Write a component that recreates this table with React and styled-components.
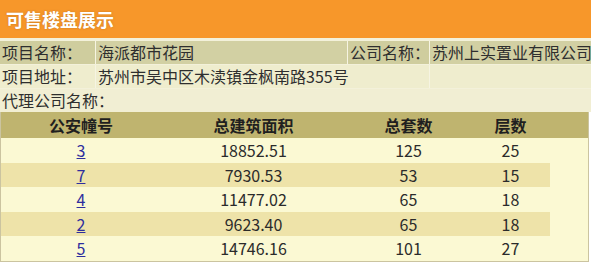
import React from "react";
import styled, { createGlobalStyle } from "styled-components";

const GlobalStyle = createGlobalStyle`
  body {
    margin: 0;
    background: #ffffff;
    font-family: "Noto Sans CJK SC", "Noto Sans", sans-serif;
  }
`;

const Wrapper = styled.div`
  width: 591px;
  display: flex;
  flex-direction: column;
`;

const TitleBar = styled.div`
  height: 38px;
  line-height: 38px;
  padding-left: 6px;
  background: #f7972a;
  color: #ffffff;
  font-size: 18px;
  font-weight: 700;
  text-shadow: 0 0 2px rgba(150, 90, 20, 0.5);
`;

const Info = styled.div`
  display: grid;
  grid-template-columns: 96px 252px 82px 1fr;
  padding-top: 3px;
  background: #f3f1da;
  row-gap: 1px;
`;

const Cell = styled.div`
  height: 23px;
  line-height: 23px;
  padding-left: 2px;
  font-size: 16px;
  color: #2e2e2e;
  white-space: nowrap;
  overflow: hidden;
  background: ${p => p.$bg};
  border-right: ${p => (p.$last ? "none" : "1px solid #f6f4e2")};
  grid-column: ${p => p.$span || "auto"};
`;

const DataBox = styled.div`
  width: 587px;
  border: 1px solid #cbc4a0;
  border-top: none;
  background: #fbf9d3;
`;

const HeadRow = styled.div`
  display: flex;
  height: 26px;
  background: #bfb46f;
`;

const Row = styled.div`
  display: flex;
  height: 24.6px;
`;

const RowInner = styled.div`
  display: grid;
  grid-template-columns: 160px 185px 125px 79px;
  width: 549px;
  background: ${p => (p.$dark ? "#eee3a9" : "transparent")};
`;

const HeadCell = styled.div`
  text-align: center;
  line-height: 26px;
  font-size: 16px;
  font-weight: 700;
  color: #1f1f1f;
`;

const DataCell = styled.div`
  text-align: center;
  line-height: 24px;
  font-size: 16px;
  color: #2b2b2b;
`;

const Link = styled.a`
  color: #2e2e9e;
  text-decoration: underline;
`;

const rows = [
  ["3", "18852.51", "125", "25"],
  ["7", "7930.53", "53", "15"],
  ["4", "11477.02", "65", "18"],
  ["2", "9623.40", "65", "18"],
  ["5", "14746.16", "101", "27"]
];

export default function App() {
  return (
    <Wrapper>
      <GlobalStyle />
      <TitleBar>可售楼盘展示</TitleBar>
      <Info>
        <Cell $bg="#cfcd9e">项目名称：</Cell>
        <Cell $bg="#d2d0a3">海派都市花园</Cell>
        <Cell $bg="#cfcd9e">公司名称：</Cell>
        <Cell $bg="#d2d0a3" $last>苏州上实置业有限公司</Cell>
        <Cell $bg="#efedce">项目地址：</Cell>
        <Cell $bg="#efedce" $span="2 / 4">苏州市吴中区木渎镇金枫南路355号</Cell>
        <Cell $bg="#efedce" $last></Cell>
        <Cell $bg="#f1eed3" $span="1 / 5" $last>代理公司名称：</Cell>
      </Info>
      <DataBox>
        <HeadRow>
          <RowInner>
            <HeadCell>公安幢号</HeadCell>
            <HeadCell>总建筑面积</HeadCell>
            <HeadCell>总套数</HeadCell>
            <HeadCell>层数</HeadCell>
          </RowInner>
        </HeadRow>
        {rows.map((r, i) => (
          <Row key={r[0]}>
            <RowInner $dark={i % 2 === 1}>
              <DataCell>
                <Link href="#">{r[0]}</Link>
              </DataCell>
              <DataCell>{r[1]}</DataCell>
              <DataCell>{r[2]}</DataCell>
              <DataCell>{r[3]}</DataCell>
            </RowInner>
          </Row>
        ))}
      </DataBox>
    </Wrapper>
  );
}
